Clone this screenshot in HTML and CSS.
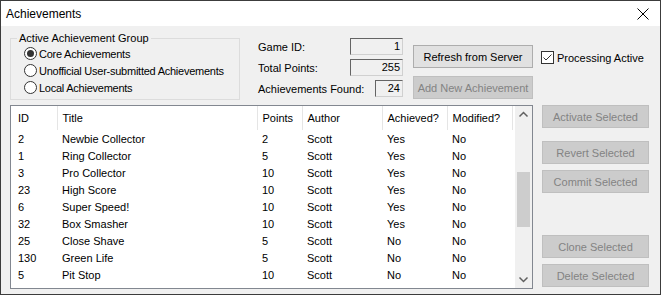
FILE: index.html
```html
<!DOCTYPE html>
<html lang="en">
<head>
    <meta charset="UTF-8">
    <title>Achievements</title>
    <link rel="stylesheet" href="styles.css">
</head>
<body>
<div class="window">
    <div class="titlebar">
        <span class="title">Achievements</span>
        <svg class="close" width="12" height="12" viewBox="0 0 12 12">
            <path d="M0.5 0.5 L11.5 11.5 M11.5 0.5 L0.5 11.5" stroke="#000" stroke-width="1" fill="none"/>
        </svg>
    </div>
    <div class="client">
        <div class="top">
            <fieldset class="group">
                <legend>Active Achievement Group</legend>
                <label class="radio"><span class="circle checked"></span>Core Achievements</label>
                <label class="radio"><span class="circle"></span>Unofficial User-submitted Achievements</label>
                <label class="radio"><span class="circle"></span>Local Achievements</label>
            </fieldset>

            <div class="info">
                <div class="info-row"><span>Game ID:</span><span class="field wide">1</span></div>
                <div class="info-row"><span>Total Points:</span><span class="field wide">255</span></div>
                <div class="info-row"><span>Achievements Found:</span><span class="field narrow">24</span></div>
            </div>

            <div class="actions">
                <button class="btn">Refresh from Server</button>
                <button class="btn" disabled>Add New Achievement</button>
            </div>

            <label class="check">
                <span class="box">
                    <svg width="11" height="11" viewBox="0 0 11 11">
                        <path d="M1.5 5.5 L4 8 L9.5 2.5" stroke="#333" stroke-width="1" fill="none"/>
                    </svg>
                </span>
                Processing Active
            </label>
        </div>

        <div class="bottom">
            <div class="list">
                <table class="grid">
                    <colgroup>
                        <col class="c-id">
                        <col class="c-title">
                        <col class="c-points">
                        <col class="c-author">
                        <col class="c-ach">
                        <col class="c-mod">
                        <col>
                    </colgroup>
                    <thead>
                    <tr>
                        <th>ID</th><th>Title</th><th>Points</th><th>Author</th><th>Achieved?</th><th>Modified?</th><th class="rest"></th>
                    </tr>
                    </thead>
                    <tbody>
                    <tr><td>2</td><td>Newbie Collector</td><td>2</td><td>Scott</td><td>Yes</td><td>No</td><td></td></tr>
                    <tr><td>1</td><td>Ring Collector</td><td>5</td><td>Scott</td><td>Yes</td><td>No</td><td></td></tr>
                    <tr><td>3</td><td>Pro Collector</td><td>10</td><td>Scott</td><td>Yes</td><td>No</td><td></td></tr>
                    <tr><td>23</td><td>High Score</td><td>10</td><td>Scott</td><td>Yes</td><td>No</td><td></td></tr>
                    <tr><td>6</td><td>Super Speed!</td><td>10</td><td>Scott</td><td>Yes</td><td>No</td><td></td></tr>
                    <tr><td>32</td><td>Box Smasher</td><td>10</td><td>Scott</td><td>Yes</td><td>No</td><td></td></tr>
                    <tr><td>25</td><td>Close Shave</td><td>5</td><td>Scott</td><td>No</td><td>No</td><td></td></tr>
                    <tr><td>130</td><td>Green Life</td><td>5</td><td>Scott</td><td>No</td><td>No</td><td></td></tr>
                    <tr><td>5</td><td>Pit Stop</td><td>10</td><td>Scott</td><td>No</td><td>No</td><td></td></tr>
                    </tbody>
                </table>
                <div class="scrollbar">
                    <svg class="arrow" width="17" height="17" viewBox="0 0 17 17">
                        <path d="M4.5 10.5 L8.5 6.5 L12.5 10.5" stroke="#606060" stroke-width="1.5" fill="none"/>
                    </svg>
                    <div class="track"><div class="thumb"></div></div>
                    <svg class="arrow" width="17" height="17" viewBox="0 0 17 17">
                        <path d="M4.5 6.5 L8.5 10.5 L12.5 6.5" stroke="#606060" stroke-width="1.5" fill="none"/>
                    </svg>
                </div>
            </div>

            <div class="side">
                <button class="btn" disabled>Activate Selected</button>
                <button class="btn gap-big" disabled>Revert Selected</button>
                <button class="btn" disabled>Commit Selected</button>
                <button class="btn gap-huge" disabled>Clone Selected</button>
                <button class="btn" disabled>Delete Selected</button>
            </div>
        </div>
    </div>
</div>
</body>
</html>
```

FILE: styles.css
```css
body {
    margin: 0;
    font-family: "Liberation Sans", Arial, sans-serif;
    font-size: 11px;
    color: #000;
    background-color: #f0f0f0;
}

.window {
    width: 661px;
    height: 295px;
    box-sizing: border-box;
    border: 1px solid #3c3c3c;
    background-color: #f0f0f0;
    display: flex;
    flex-direction: column;
}

.titlebar {
    height: 25px;
    background-color: #ffffff;
    display: flex;
    align-items: center;
    justify-content: space-between;
    padding: 0 11px 0 5px;
}

.title {
    font-size: 12px;
}

.client {
    padding-left: 9px;
}

/* top area */

.top {
    display: flex;
    height: 79px;
}

.group {
    box-sizing: border-box;
    width: 230px;
    height: 69px;
    margin: 5px 0 0 0;
    padding: 0 6px;
    border: 1px solid #dcdcdc;
    min-inline-size: 0;
}

.group legend {
    padding: 0 2px;
    line-height: 14px;
}

.radio {
    display: flex;
    align-items: center;
    height: 17px;
    margin-left: 7px;
    white-space: nowrap;
    letter-spacing: -0.25px;
}

.circle {
    flex: none;
    width: 11px;
    height: 11px;
    border: 1px solid #333;
    border-radius: 50%;
    background-color: #fff;
    margin-right: 2px;
    position: relative;
}

.circle.checked::after {
    content: "";
    position: absolute;
    left: 2px;
    top: 2px;
    width: 7px;
    height: 7px;
    border-radius: 50%;
    background-color: #333;
}

.info {
    width: 145px;
    margin: 12px 0 0 18px;
    display: flex;
    flex-direction: column;
    gap: 4px;
}

.info-row {
    display: flex;
    justify-content: space-between;
    align-items: center;
    height: 17px;
}

.field {
    box-sizing: border-box;
    height: 17px;
    line-height: 15px;
    text-align: right;
    padding-right: 2px;
    border: 1px solid;
    border-color: #646464 #d0d0d0 #d0d0d0 #646464;
    background-color: #f0f0f0;
}

.field.wide {
    width: 53px;
}

.field.narrow {
    width: 28px;
}

.actions {
    width: 120px;
    margin: 19px 0 0 10px;
    display: flex;
    flex-direction: column;
    gap: 8px;
}

.btn {
    box-sizing: border-box;
    height: 23px;
    padding: 0;
    font-family: "Liberation Sans", Arial, sans-serif;
    font-size: 11px;
    color: #000;
    background-color: #e1e1e1;
    border: 1px solid #adadad;
}

.btn:disabled {
    color: #838383;
    background-color: #cccccc;
    border-color: #bfbfbf;
}

.check {
    display: flex;
    align-items: center;
    height: 13px;
    margin: 25px 0 0 8px;
    white-space: nowrap;
}

.box {
    width: 11px;
    height: 11px;
    border: 1px solid #333;
    background-color: #fff;
    margin-right: 3px;
    display: flex;
}

/* list area */

.bottom {
    display: flex;
}

.list {
    box-sizing: border-box;
    width: 523px;
    height: 184px;
    border: 1px solid #828790;
    background-color: #fff;
    display: flex;
    overflow: hidden;
}

.grid {
    width: 504px;
    table-layout: fixed;
    border-collapse: collapse;
    align-self: flex-start;
}

.c-id { width: 46px; }
.c-title { width: 200px; }
.c-points { width: 45px; }
.c-author { width: 80px; }
.c-ach { width: 65px; }
.c-mod { width: 65px; }

.grid th {
    height: 24px;
    padding: 0 0 0 5px;
    font-weight: normal;
    text-align: left;
    border-right: 1px solid #e5e5e5;
}

.grid th:first-child,
.grid td:first-child {
    padding-left: 7px;
}

.grid th.rest {
    border-right: none;
}

.grid td {
    height: 17px;
    padding: 0 0 0 5px;
    white-space: nowrap;
}

.scrollbar {
    width: 17px;
    background-color: #f0f0f0;
    display: flex;
    flex-direction: column;
}

.track {
    flex: 1;
    padding: 49px 2px 0 2px;
}

.thumb {
    height: 55px;
    background-color: #cdcdcd;
}

.side {
    width: 107px;
    margin-left: 9px;
    display: flex;
    flex-direction: column;
    gap: 6px;
}

.side .gap-big {
    margin-top: 7px;
}

.side .gap-huge {
    margin-top: 36px;
}
```
